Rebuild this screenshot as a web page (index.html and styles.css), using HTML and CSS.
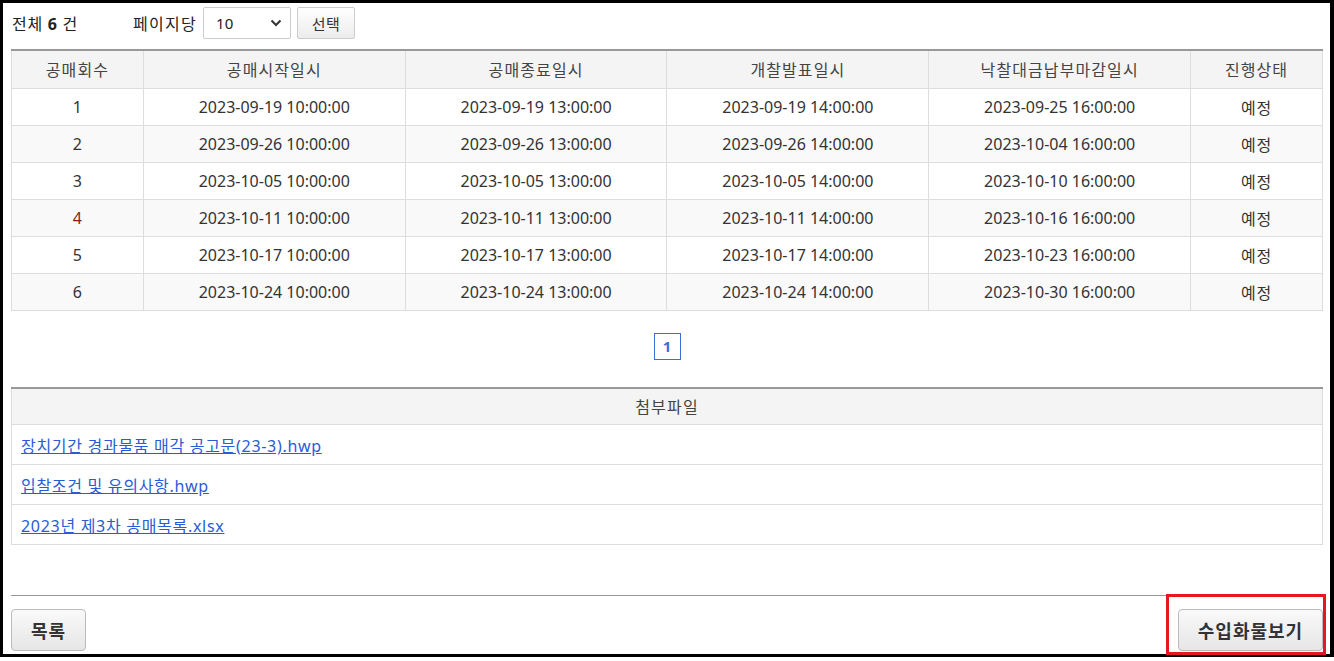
FILE: index.html
```html
<!DOCTYPE html>
<html lang="ko">
<head>
<meta charset="utf-8">
<title>공매회차</title>
<link rel="stylesheet" href="styles.css">
</head>
<body>
<div class="frame">
  <div class="topbar">
    <span class="total">전체 <b>6</b> 건</span>
    <span class="perpage">페이지당</span>
    <div class="select">
      <span>10</span>
      <svg class="chev" width="12" height="8" viewBox="0 0 12 8"><path d="M1.5 1.5 L6 6 L10.5 1.5" fill="none" stroke="#333" stroke-width="2"/></svg>
    </div>
    <button class="btn-sm">선택</button>
  </div>

  <table class="grid">
    <colgroup>
      <col class="c-narrow"><col class="c-wide"><col class="c-wide"><col class="c-wide"><col class="c-wide"><col class="c-narrow">
    </colgroup>
    <thead>
      <tr><th>공매회수</th><th>공매시작일시</th><th>공매종료일시</th><th>개찰발표일시</th><th>낙찰대금납부마감일시</th><th>진행상태</th></tr>
    </thead>
    <tbody>
      <tr><td>1</td><td>2023-09-19 10:00:00</td><td>2023-09-19 13:00:00</td><td>2023-09-19 14:00:00</td><td>2023-09-25 16:00:00</td><td class="ko">예정</td></tr>
      <tr><td>2</td><td>2023-09-26 10:00:00</td><td>2023-09-26 13:00:00</td><td>2023-09-26 14:00:00</td><td>2023-10-04 16:00:00</td><td class="ko">예정</td></tr>
      <tr><td>3</td><td>2023-10-05 10:00:00</td><td>2023-10-05 13:00:00</td><td>2023-10-05 14:00:00</td><td>2023-10-10 16:00:00</td><td class="ko">예정</td></tr>
      <tr><td class="red">4</td><td>2023-10-11 10:00:00</td><td>2023-10-11 13:00:00</td><td>2023-10-11 14:00:00</td><td>2023-10-16 16:00:00</td><td class="ko">예정</td></tr>
      <tr><td>5</td><td>2023-10-17 10:00:00</td><td>2023-10-17 13:00:00</td><td>2023-10-17 14:00:00</td><td>2023-10-23 16:00:00</td><td class="ko">예정</td></tr>
      <tr><td>6</td><td>2023-10-24 10:00:00</td><td>2023-10-24 13:00:00</td><td>2023-10-24 14:00:00</td><td>2023-10-30 16:00:00</td><td class="ko">예정</td></tr>
    </tbody>
  </table>

  <div class="paging"><a class="page on" href="#">1</a></div>

  <table class="files">
    <thead><tr><th>첨부파일</th></tr></thead>
    <tbody>
      <tr><td><a href="#">장치기간 경과물품 매각 공고문(23-3).hwp</a></td></tr>
      <tr><td><a href="#">입찰조건 및 유의사항.hwp</a></td></tr>
      <tr><td><a href="#">2023년 제3차 공매목록.xlsx</a></td></tr>
    </tbody>
  </table>

  <div class="actions">
    <button class="btn-lg">목록</button>
    <span class="mark"><button class="btn-lg">수입화물보기</button></span>
  </div>
</div>
</body>
</html>
```

FILE: styles.css
```css
* { box-sizing: border-box; }
html, body { margin: 0; padding: 0; background: #fff; }
body {
  font-family: "Noto Sans", "Noto Sans CJK KR", sans-serif;
  font-size: 16px;
  color: #333;
}
.frame {
  width: 1334px;
  height: 657px;
  border: 3px solid #000;
  border-right-width: 4px;
  padding: 4px 7px 0 8px;
  display: flex;
  flex-direction: column;
}
.topbar {
  height: 32px;
  display: flex;
  align-items: center;
  margin-bottom: 10px;
  color: #222;
}
.total { margin-left: 1px; width: 121px; letter-spacing: 0.7px; }
.total b { font-weight: 700; }
.perpage { margin-right: 6px; letter-spacing: 1.3px; }
.select {
  width: 88px;
  height: 32px;
  border: 1px solid #ccc;
  border-radius: 2px;
  display: flex;
  align-items: center;
  justify-content: space-between;
  padding: 0 8px 0 12px;
  color: #222;
  font-size: 15px;
}
.chev { display: block; }
.btn-sm {
  margin-left: 6px;
  width: 58px;
  height: 32px;
  border: 1px solid #ccc;
  border-radius: 2px;
  background: linear-gradient(#fff, #ececec);
  font: inherit;
  font-size: 15px;
  letter-spacing: 0.5px;
  color: #333;
  padding: 0;
}
table { border-collapse: collapse; width: 1312px; }
.grid { border-top: 2px solid #999; }
.c-narrow { width: 132px; }
.c-wide { width: 262px; }
.grid th, .grid td {
  border: 1px solid #ddd;
  height: 37px;
  padding: 0;
  text-align: center;
  font-weight: 400;
}
.grid th { height: 38px; background: #f4f4f4; color: #444; letter-spacing: 1.1px; }
.grid td.ko { letter-spacing: 0.8px; }
.grid tbody tr:nth-child(even) td { background: #f9f9f9; }
.grid td.red { color: #8a1a1a; }
.paging {
  display: flex;
  justify-content: center;
  margin: 22px 0 27px;
}
.page {
  width: 27px;
  height: 27px;
  border: 1px solid #3a6fd8;
  color: #3a6fd8;
  font-weight: 700;
  font-size: 15px;
  display: flex;
  align-items: center;
  justify-content: center;
  text-decoration: none;
}
.files { border-top: 2px solid #999; }
.files th, .files td { border: 1px solid #ddd; padding: 0; }
.files th { height: 37px; background: #f4f4f4; font-weight: 400; color: #444; letter-spacing: 1.2px; }
.files td { height: 40px; padding-left: 9px; text-align: left; }
.files a { color: #2a5bd7; text-decoration: underline; letter-spacing: 0.7px; }
.actions {
  margin-top: auto;
  border-top: 1px solid #999;
  width: 1312px;
  display: flex;
  justify-content: space-between;
  align-items: flex-start;
  padding-top: 13px;
  height: 59px;
}
.btn-lg {
  height: 42px;
  padding: 0;
  border: 1px solid #bbb;
  border-radius: 4px;
  background: linear-gradient(#fafafa, #e6e6e6);
  font: inherit;
  font-size: 18px;
  font-weight: 700;
  letter-spacing: 1px;
  color: #333;
}
.actions > .btn-lg { width: 75px; }
.mark { position: relative; display: block; }
.mark .btn-lg { width: 145px; display: block; }
.mark::after {
  content: "";
  position: absolute;
  left: -12px; top: -15px; right: -3px; bottom: -4px;
  border: 3px solid #e8161f;
  pointer-events: none;
}
```
